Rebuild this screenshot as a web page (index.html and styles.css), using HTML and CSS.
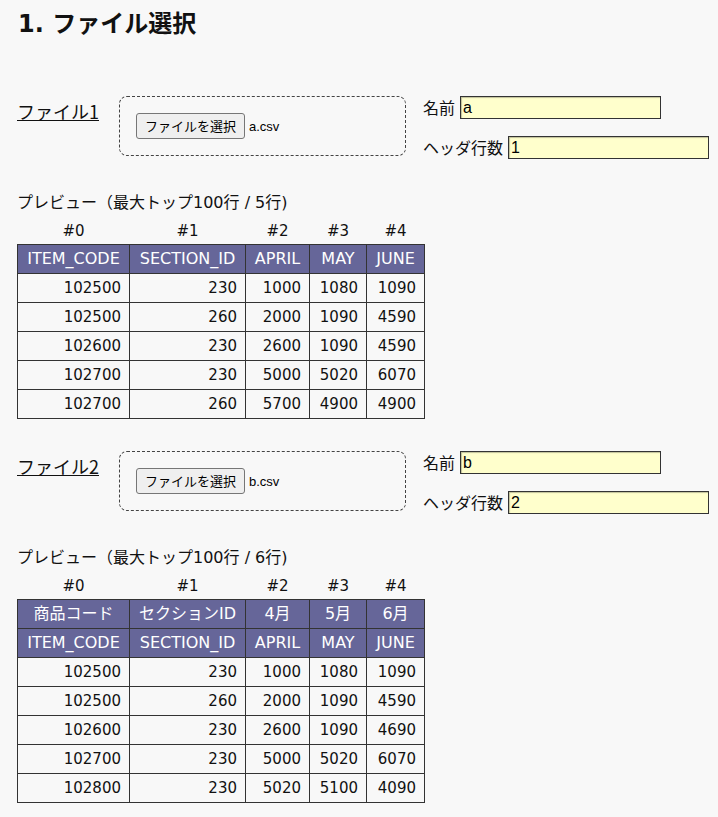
FILE: index.html
```html
<!DOCTYPE html>
<html lang="ja">
<head>
<meta charset="utf-8">
<title>ファイル選択</title>
<link rel="stylesheet" href="styles.css">
</head>
<body>
<h1 class="title">1. ファイル選択</h1>

<section class="file-section">
  <div class="file-row">
    <a class="file-label">ファイル1</a>
    <div class="drop-box">
      <button class="file-button" type="button">ファイルを選択</button>
      <span class="file-name">a.csv</span>
    </div>
    <div class="fields">
      <label class="field"><span class="field-label">名前</span><input class="field-input" type="text" value="a"></label>
      <label class="field"><span class="field-label">ヘッダ行数</span><input class="field-input" type="text" value="1"></label>
    </div>
  </div>
  <p class="preview-title">プレビュー（最大トップ100行 / 5行)</p>
  <table class="preview">
    <colgroup><col class="c0"><col class="c1"><col class="c2"><col class="c3"><col class="c4"></colgroup>
    <thead>
      <tr class="index-row"><td>#0</td><td>#1</td><td>#2</td><td>#3</td><td>#4</td></tr>
      <tr class="head-row"><th>ITEM_CODE</th><th>SECTION_ID</th><th>APRIL</th><th>MAY</th><th>JUNE</th></tr>
    </thead>
    <tbody>
      <tr><td>102500</td><td>230</td><td>1000</td><td>1080</td><td>1090</td></tr>
      <tr><td>102500</td><td>260</td><td>2000</td><td>1090</td><td>4590</td></tr>
      <tr><td>102600</td><td>230</td><td>2600</td><td>1090</td><td>4590</td></tr>
      <tr><td>102700</td><td>230</td><td>5000</td><td>5020</td><td>6070</td></tr>
      <tr><td>102700</td><td>260</td><td>5700</td><td>4900</td><td>4900</td></tr>
    </tbody>
  </table>
</section>

<section class="file-section second">
  <div class="file-row">
    <a class="file-label">ファイル2</a>
    <div class="drop-box">
      <button class="file-button" type="button">ファイルを選択</button>
      <span class="file-name">b.csv</span>
    </div>
    <div class="fields">
      <label class="field"><span class="field-label">名前</span><input class="field-input" type="text" value="b"></label>
      <label class="field"><span class="field-label">ヘッダ行数</span><input class="field-input" type="text" value="2"></label>
    </div>
  </div>
  <p class="preview-title">プレビュー（最大トップ100行 / 6行)</p>
  <table class="preview">
    <colgroup><col class="c0"><col class="c1"><col class="c2"><col class="c3"><col class="c4"></colgroup>
    <thead>
      <tr class="index-row"><td>#0</td><td>#1</td><td>#2</td><td>#3</td><td>#4</td></tr>
      <tr class="head-row"><th>商品コード</th><th>セクションID</th><th>4月</th><th>5月</th><th>6月</th></tr>
      <tr class="head-row"><th>ITEM_CODE</th><th>SECTION_ID</th><th>APRIL</th><th>MAY</th><th>JUNE</th></tr>
    </thead>
    <tbody>
      <tr><td>102500</td><td>230</td><td>1000</td><td>1080</td><td>1090</td></tr>
      <tr><td>102500</td><td>260</td><td>2000</td><td>1090</td><td>4590</td></tr>
      <tr><td>102600</td><td>230</td><td>2600</td><td>1090</td><td>4690</td></tr>
      <tr><td>102700</td><td>230</td><td>5000</td><td>5020</td><td>6070</td></tr>
      <tr><td>102800</td><td>230</td><td>5020</td><td>5100</td><td>4090</td></tr>
    </tbody>
  </table>
</section>
</body>
</html>
```

FILE: styles.css
```css
html, body {
  margin: 0;
  background: #f8f8f8;
}
body {
  padding: 0 0 0 17px;
  color: #111;
  font-family: "DejaVu Sans", "Noto Sans CJK JP", sans-serif;
  font-size: 16px;
}
.title {
  margin: 0;
  padding-top: 8px;
  font-size: 24px;
  line-height: 32px;
  font-weight: bold;
  padding-left: 1px;
}
.file-section {
  margin-top: 56px;
}
.file-section.second {
  margin-top: 32px;
}
.file-row {
  display: flex;
  align-items: flex-start;
}
.file-label {
  width: 102px;
  flex: none;
  padding-top: 2px;
  font-family: "Noto Sans CJK JP", sans-serif;
  font-size: 18px;
  line-height: 26px;
  text-decoration: underline;
  color: #111;
}
.drop-box {
  width: 287px;
  height: 60px;
  box-sizing: border-box;
  flex: none;
  border: 1px dashed #444;
  border-radius: 8px;
  padding: 16px;
  display: flex;
  align-items: center;
  gap: 4px;
}
.file-button {
  height: 26px;
  box-sizing: border-box;
  padding: 0 8px;
  border: 1px solid #767676;
  border-radius: 3px;
  background: #efefef;
  color: #000;
  font-family: "Noto Sans CJK JP", sans-serif;
  font-size: 13px;
  line-height: 22px;
}
.file-name {
  font-family: "Liberation Sans", sans-serif;
  font-size: 13px;
  color: #000;
}
.fields {
  flex: none;
  margin-left: 17px;
  display: flex;
  flex-direction: column;
  gap: 17px;
}
.field {
  display: flex;
  align-items: center;
  gap: 5px;
  white-space: nowrap;
}
.field-label {
  flex: none;
  font-family: "Noto Sans CJK JP", sans-serif;
  font-size: 16px;
  line-height: 23px;
}
.field-input {
  flex: none;
  width: 201px;
  height: 23px;
  box-sizing: border-box;
  margin: 0;
  padding: 0 2px;
  border: 1px solid #333;
  box-shadow: inset 1px 1px 1px rgba(0, 0, 0, 0.25);
  background: #ffffcc;
  color: #000;
  font-family: "Liberation Sans", sans-serif;
  font-size: 16px;
}
.preview-title {
  margin: 33px 0 0;
  font-size: 16px;
  line-height: 22px;
}
.preview {
  border-collapse: collapse;
  font-size: 15px;
}
.c0 { width: 112px; }
.c1 { width: 116px; }
.c2 { width: 64px; }
.c3 { width: 57px; }
.c4 { width: 58px; }
.preview td, .preview th {
  height: 28px;
  padding: 0 8px;
  line-height: 28px;
  white-space: nowrap;
}
.preview .index-row td {
  height: 26px;
  padding-top: 4px;
  line-height: 26px;
  text-align: center;
  border: none;
  font-size: 15px;
}
.preview th {
  background: #666699;
  color: #fff;
  font-weight: normal;
  font-size: 16px;
  text-align: center;
  border: 1px solid #333;
}
.preview tbody td {
  text-align: right;
  border: 1px solid #333;
}
```
